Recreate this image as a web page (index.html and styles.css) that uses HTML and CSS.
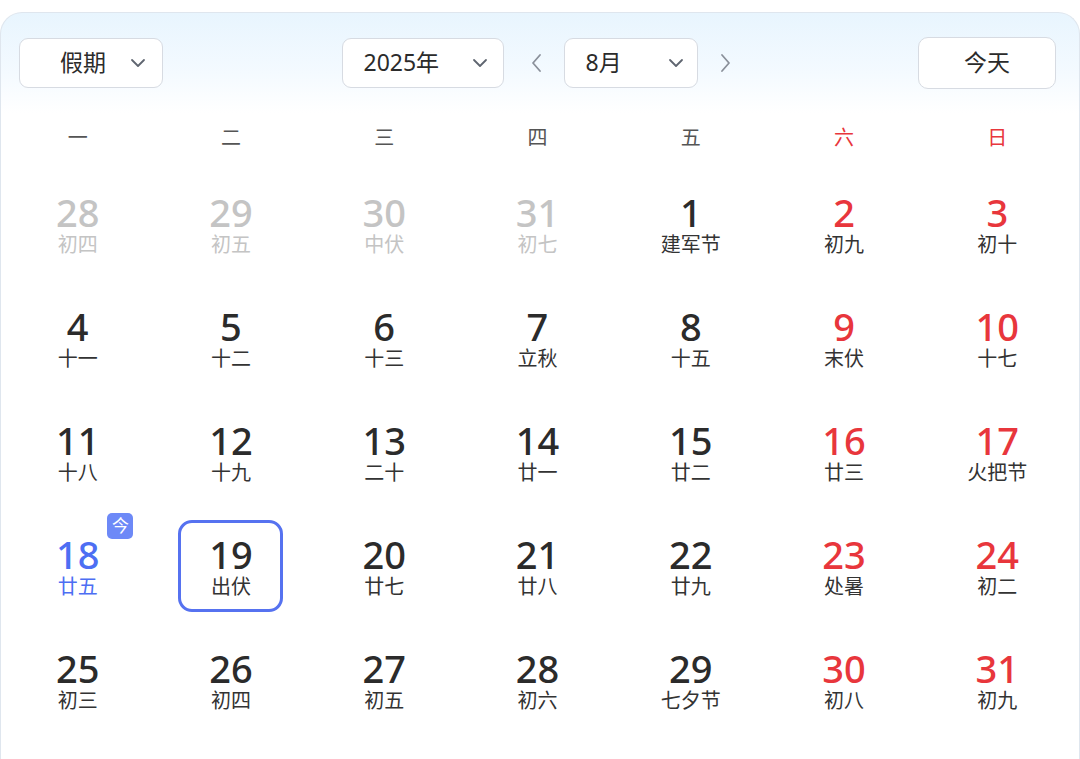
FILE: index.html
```
<!DOCTYPE html>
<html lang="zh-CN">
<head>
    <meta charset="UTF-8">
    <title>万年历</title>
    <link rel="stylesheet" href="styles.css">
</head>
<body>

<div class="calendar">
    <div class="toolbar">
        <div class="select select-holiday">
            <span>假期</span>
            <svg class="chevron" width="16" height="10" viewBox="0 0 16 10"><path d="M2 2 L8 8 L14 2"/></svg>
        </div>

        <div class="switcher">
            <div class="select select-year">
                <span>2025年</span>
                <svg class="chevron" width="16" height="10" viewBox="0 0 16 10"><path d="M2 2 L8 8 L14 2"/></svg>
            </div>
            <svg class="arrow" width="18" height="22" viewBox="0 0 18 22"><path d="M12 3 L5 11 L12 19"/></svg>
            <div class="select select-month">
                <span>8月</span>
                <svg class="chevron" width="16" height="10" viewBox="0 0 16 10"><path d="M2 2 L8 8 L14 2"/></svg>
            </div>
            <svg class="arrow" width="18" height="22" viewBox="0 0 18 22"><path d="M6 3 L13 11 L6 19"/></svg>
        </div>

        <button class="btn-today"><span>今天</span></button>
    </div>

    <div class="weekdays">
        <span>一</span><span>二</span><span>三</span><span>四</span><span>五</span>
        <span class="red">六</span><span class="red">日</span>
    </div>

    <div class="days">
        <!-- week 1 -->
        <div class="day other"><div class="inner"><span class="num">28</span><span class="lunar">初四</span></div></div>
        <div class="day other"><div class="inner"><span class="num">29</span><span class="lunar">初五</span></div></div>
        <div class="day other"><div class="inner"><span class="num">30</span><span class="lunar">中伏</span></div></div>
        <div class="day other"><div class="inner"><span class="num">31</span><span class="lunar">初七</span></div></div>
        <div class="day"><div class="inner"><span class="num">1</span><span class="lunar">建军节</span></div></div>
        <div class="day weekend"><div class="inner"><span class="num">2</span><span class="lunar">初九</span></div></div>
        <div class="day weekend"><div class="inner"><span class="num">3</span><span class="lunar">初十</span></div></div>

        <!-- week 2 -->
        <div class="day"><div class="inner"><span class="num">4</span><span class="lunar">十一</span></div></div>
        <div class="day"><div class="inner"><span class="num">5</span><span class="lunar">十二</span></div></div>
        <div class="day"><div class="inner"><span class="num">6</span><span class="lunar">十三</span></div></div>
        <div class="day"><div class="inner"><span class="num">7</span><span class="lunar">立秋</span></div></div>
        <div class="day"><div class="inner"><span class="num">8</span><span class="lunar">十五</span></div></div>
        <div class="day weekend"><div class="inner"><span class="num">9</span><span class="lunar">末伏</span></div></div>
        <div class="day weekend"><div class="inner"><span class="num">10</span><span class="lunar">十七</span></div></div>

        <!-- week 3 -->
        <div class="day"><div class="inner"><span class="num">11</span><span class="lunar">十八</span></div></div>
        <div class="day"><div class="inner"><span class="num">12</span><span class="lunar">十九</span></div></div>
        <div class="day"><div class="inner"><span class="num">13</span><span class="lunar">二十</span></div></div>
        <div class="day"><div class="inner"><span class="num">14</span><span class="lunar">廿一</span></div></div>
        <div class="day"><div class="inner"><span class="num">15</span><span class="lunar">廿二</span></div></div>
        <div class="day weekend"><div class="inner"><span class="num">16</span><span class="lunar">廿三</span></div></div>
        <div class="day weekend"><div class="inner"><span class="num">17</span><span class="lunar">火把节</span></div></div>

        <!-- week 4 -->
        <div class="day today"><div class="inner"><span class="num">18<span class="badge">今</span></span><span class="lunar">廿五</span></div></div>
        <div class="day selected"><div class="inner"><span class="num">19</span><span class="lunar">出伏</span></div></div>
        <div class="day"><div class="inner"><span class="num">20</span><span class="lunar">廿七</span></div></div>
        <div class="day"><div class="inner"><span class="num">21</span><span class="lunar">廿八</span></div></div>
        <div class="day"><div class="inner"><span class="num">22</span><span class="lunar">廿九</span></div></div>
        <div class="day weekend"><div class="inner"><span class="num">23</span><span class="lunar">处暑</span></div></div>
        <div class="day weekend"><div class="inner"><span class="num">24</span><span class="lunar">初二</span></div></div>

        <!-- week 5 -->
        <div class="day"><div class="inner"><span class="num">25</span><span class="lunar">初三</span></div></div>
        <div class="day"><div class="inner"><span class="num">26</span><span class="lunar">初四</span></div></div>
        <div class="day"><div class="inner"><span class="num">27</span><span class="lunar">初五</span></div></div>
        <div class="day"><div class="inner"><span class="num">28</span><span class="lunar">初六</span></div></div>
        <div class="day"><div class="inner"><span class="num">29</span><span class="lunar">七夕节</span></div></div>
        <div class="day weekend"><div class="inner"><span class="num">30</span><span class="lunar">初八</span></div></div>
        <div class="day weekend"><div class="inner"><span class="num">31</span><span class="lunar">初九</span></div></div>
    </div>
</div>

</body>
</html>
```

FILE: styles.css
```
:root {
    --text: #2b2b2b;
    --muted: #c4c4c4;
    --red: #e8363c;
    --blue: #4d6ef3;
    --line: #d7dbe2;
}

* { box-sizing: border-box; }

body {
    margin: 0;
    background: #fff;
    color: var(--text);
    font-family: "Noto Sans", "Noto Sans CJK SC", sans-serif;
}

.calendar {
    margin-top: 12px;
    height: 747px;
    border: 1px solid #dfe6ee;
    border-bottom: none;
    border-radius: 22px 22px 0 0;
    background: linear-gradient(180deg, #e8f5fe 0, #f4faff 60px, #fff 100px);
}

/* --- toolbar --- */
.toolbar {
    display: grid;
    grid-template-columns: 1fr auto 1fr;
    align-items: center;
    padding: 24px 23px 0 18px;
}

.select {
    display: flex;
    align-items: center;
    justify-content: space-between;
    height: 50px;
    border: 1px solid var(--line);
    border-radius: 9px;
    background: #fff;
    font-size: 23px;
    font-family: "Noto Sans", "Noto Sans CJK SC", sans-serif;
    color: var(--text);
}
.select span, .btn-today span { margin-bottom: 5px; }

.select-holiday { width: 144px; padding: 0 16px 0 40px; }
.select-year { width: 162px; padding: 0 15px 0 21px; }
.select-month { width: 134px; padding: 0 13px 0 21px; }

.chevron path, .arrow path {
    fill: none;
    stroke-width: 1.8;
    stroke-linecap: round;
    stroke-linejoin: round;
}
.chevron path { stroke: #5f6570; }
.arrow path { stroke: #8a909a; }

.switcher { display: flex; align-items: center; }
.switcher .arrow:first-of-type { margin: 0 18px 0 24px; }
.switcher .arrow:last-of-type { margin-left: 18px; }

.btn-today {
    display: flex;
    align-items: center;
    justify-content: center;
    justify-self: end;
    width: 138px;
    height: 52px;
    border: 1px solid var(--line);
    border-radius: 10px;
    background: #fff;
    font-size: 23px;
    font-family: "Noto Sans", "Noto Sans CJK SC", sans-serif;
    color: var(--text);
}

/* --- weekdays --- */
.weekdays {
    display: grid;
    grid-template-columns: repeat(7, 1fr);
    height: 48px;
    margin-top: 23px;
    padding-right: 5px;
    align-items: center;
    text-align: center;
    font-size: 20px;
    color: #555;
}
.weekdays .red { color: var(--red); }

/* --- days --- */
.days {
    display: grid;
    grid-template-columns: repeat(7, 1fr);
    grid-auto-rows: 114px;
    margin-top: 7px;
    padding-right: 5px;
}

.day { display: flex; align-items: center; justify-content: center; }

.inner {
    display: flex;
    flex-direction: column;
    align-items: center;
    justify-content: center;
    width: 105px;
    height: 92px;
    border: 3px solid transparent;
    border-radius: 14px;
}

.num {
    position: relative;
    font-size: 38px;
    line-height: 40px;
    font-weight: 500;
}

.lunar {
    margin-top: 2px;
    font-size: 20px;
    line-height: 22px;
    color: #333;
}

.day.other .num, .day.other .lunar { color: var(--muted); }
.day.weekend .num { color: var(--red); }
.day.today .num, .day.today .lunar { color: var(--blue); }
.day.selected .inner { border-color: #5672f0; }

.badge {
    position: absolute;
    left: calc(100% + 8px);
    top: -21px;
    width: 26px;
    height: 26px;
    border-radius: 5px;
    background: #6d89f7;
    color: #fff;
    font-size: 17px;
    line-height: 26px;
    font-weight: 400;
    text-align: center;
}
```
